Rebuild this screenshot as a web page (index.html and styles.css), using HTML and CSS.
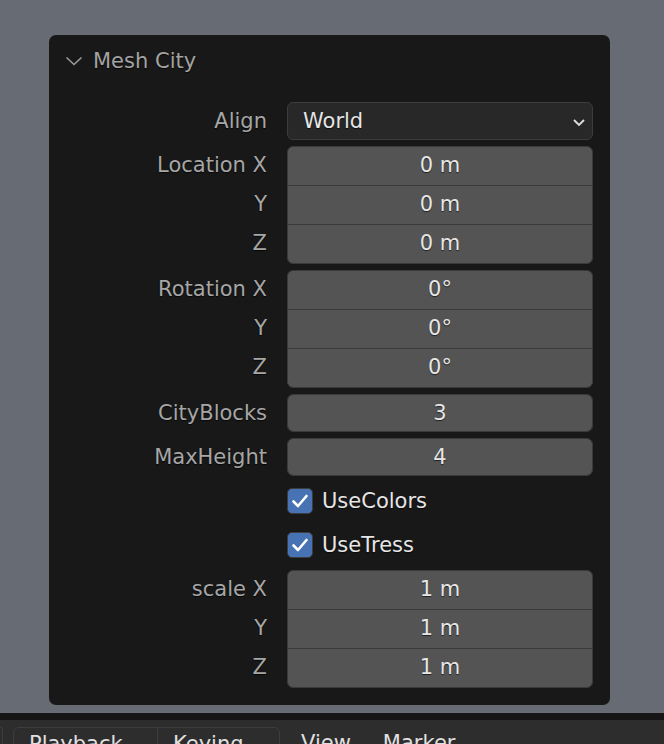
FILE: index.html
```html
<!DOCTYPE html>
<html>
<head>
<meta charset="utf-8">
<link rel="stylesheet" href="styles.css">
</head>
<body>
<div class="viewport">
  <div class="panel">
    <div class="panel-header">
      <svg class="chev" width="18" height="10" viewBox="0 0 18 10"><path d="M1.5 1.5 L9 8.5 L16.5 1.5" fill="none" stroke="#9c9c9c" stroke-width="1.6"/></svg>
      <span>Mesh City</span>
    </div>
    <div class="panel-body">
      <div class="row">
        <div class="labels"><div class="lbl">Align</div></div>
        <div class="dropdown"><span>World</span>
          <svg width="14" height="9" viewBox="0 0 14 9"><path d="M2 2 L7 7 L12 2" fill="none" stroke="#e0e0e0" stroke-width="1.8"/></svg>
        </div>
      </div>
      <div class="row">
        <div class="labels g3"><div class="lbl">Location X</div><div class="lbl">Y</div><div class="lbl">Z</div></div>
        <div class="group"><div class="cell">0 m</div><div class="cell">0 m</div><div class="cell">0 m</div></div>
      </div>
      <div class="row">
        <div class="labels g3"><div class="lbl">Rotation X</div><div class="lbl">Y</div><div class="lbl">Z</div></div>
        <div class="group"><div class="cell">0°</div><div class="cell">0°</div><div class="cell">0°</div></div>
      </div>
      <div class="row">
        <div class="labels"><div class="lbl">CityBlocks</div></div>
        <div class="group single"><div class="cell">3</div></div>
      </div>
      <div class="row">
        <div class="labels"><div class="lbl">MaxHeight</div></div>
        <div class="group single"><div class="cell">4</div></div>
      </div>
      <div class="row">
        <div class="labels"></div>
        <div class="check-row"><span class="box"><svg width="18" height="16" viewBox="0 0 18 16"><path d="M2.5 8.5 L7 13 L15.5 3" fill="none" stroke="#fff" stroke-width="2.6" stroke-linecap="round" stroke-linejoin="round"/></svg></span><span>UseColors</span></div>
      </div>
      <div class="row">
        <div class="labels"></div>
        <div class="check-row"><span class="box"><svg width="18" height="16" viewBox="0 0 18 16"><path d="M2.5 8.5 L7 13 L15.5 3" fill="none" stroke="#fff" stroke-width="2.6" stroke-linecap="round" stroke-linejoin="round"/></svg></span><span>UseTress</span></div>
      </div>
      <div class="row">
        <div class="labels g3"><div class="lbl">scale X</div><div class="lbl">Y</div><div class="lbl">Z</div></div>
        <div class="group"><div class="cell">1 m</div><div class="cell">1 m</div><div class="cell">1 m</div></div>
      </div>
    </div>
  </div>
</div>
<div class="timeline">
  <div class="stub"></div>
  <div class="tabs">
    <div class="tab first">Playback <span class="arr">⌄</span></div>
    <div class="tab">Keying <span class="arr">⌄</span></div>
  </div>
  <div class="menu">View</div>
  <div class="menu">Marker</div>
</div>
</body>
</html>
```

FILE: styles.css
```css
html, body {
  margin: 0;
  padding: 0;
}
body {
  width: 664px;
  height: 744px;
  overflow: hidden;
  background: #676c74;
  font-family: "DejaVu Sans", sans-serif;
  font-size: 21px;
}
.viewport {
  height: 713px;
  padding: 35px 0 0 49px;
  box-sizing: border-box;
}
.panel {
  width: 561px;
  height: 670px;
  background: #181818;
  border-radius: 7px;
  box-sizing: border-box;
}
.panel-header {
  height: 50px;
  display: flex;
  align-items: center;
  padding-left: 16px;
  padding-top: 2px;
  box-sizing: border-box;
  color: #a3a3a3;
  gap: 10px;
  text-shadow: 0 1px 1px rgba(0,0,0,0.7);
}
.chev { margin-top: -1px; }
.panel-body {
  padding: 17px 17px 0 0;
  display: flex;
  flex-direction: column;
  gap: 6px;
}
.row {
  display: flex;
  gap: 20px;
}
.labels {
  flex: 1;
  display: flex;
  flex-direction: column;
  text-align: right;
  color: #a6a6a6;
  text-shadow: 0 1px 1px rgba(0,0,0,0.7);
}
.labels.g3 { padding-top: 1px; }
.lbl {
  height: 38px;
  line-height: 38px;
}
.labels.g3 .lbl { height: 39px; line-height: 36px; }
.dropdown {
  width: 306px;
  height: 38px;
  box-sizing: border-box;
  background: #282828;
  border: 1px solid #3c3c3c;
  border-radius: 6px;
  display: flex;
  align-items: center;
  justify-content: space-between;
  padding: 0 6px 0 15px;
  color: #e6e6e6;
  text-shadow: 0 1px 1px rgba(0,0,0,0.7);
}
.dropdown svg { margin-top: 2px; }
.group {
  width: 306px;
  box-sizing: border-box;
  border: 1px solid #3a3a3a;
  border-radius: 6px;
  background: #3a3a3a;
  display: flex;
  flex-direction: column;
  gap: 1px;
  overflow: hidden;
}
.cell {
  height: 38px;
  line-height: 36px;
  background: #545454;
  color: #e6e6e6;
  text-align: center;
  text-shadow: 0 1px 1px rgba(0,0,0,0.6);
}
.group.single .cell { height: 36px; line-height: 37px; }
.check-row {
  width: 306px;
  height: 38px;
  display: flex;
  align-items: center;
  gap: 9px;
  padding-left: 1px;
  color: #e6e6e6;
  text-shadow: 0 1px 1px rgba(0,0,0,0.6);
}
.box {
  width: 26px;
  height: 26px;
  box-sizing: border-box;
  background: #4772b3;
  border: 1px solid #3d3d3d;
  border-radius: 5px;
  display: flex;
  align-items: center;
  justify-content: center;
}
.timeline {
  height: 31px;
  background: #2d2d2d;
  border-top: 7px solid #161616;
  box-sizing: content-box;
  display: flex;
  align-items: flex-start;
  padding-top: 0;
  overflow: hidden;
  color: #e0e0e0;
}
.stub {
  width: 3px;
  height: 30px;
  margin-top: 7px;
  border: 1px solid #3c3c3c;
  border-left: none;
  border-radius: 0 5px 0 0;
  box-sizing: border-box;
}
.tabs {
  margin-left: 10px;
  margin-top: 7px;
  display: flex;
  border: 1px solid #3d3d3d;
  border-radius: 6px;
  height: 40px;
}
.tab {
  padding: 4px 0 0 15px;
  box-sizing: border-box;
}
.tab.first {
  width: 144px;
  border-right: 1px solid #3d3d3d;
}
.tab:not(.first) { width: 121px; }
.arr { font-size: 14px; color: #bbb; }
.menu {
  margin-top: 11px;
}
.tabs + .menu { margin-left: 21px; }
.menu + .menu { margin-left: 32px; }
```
